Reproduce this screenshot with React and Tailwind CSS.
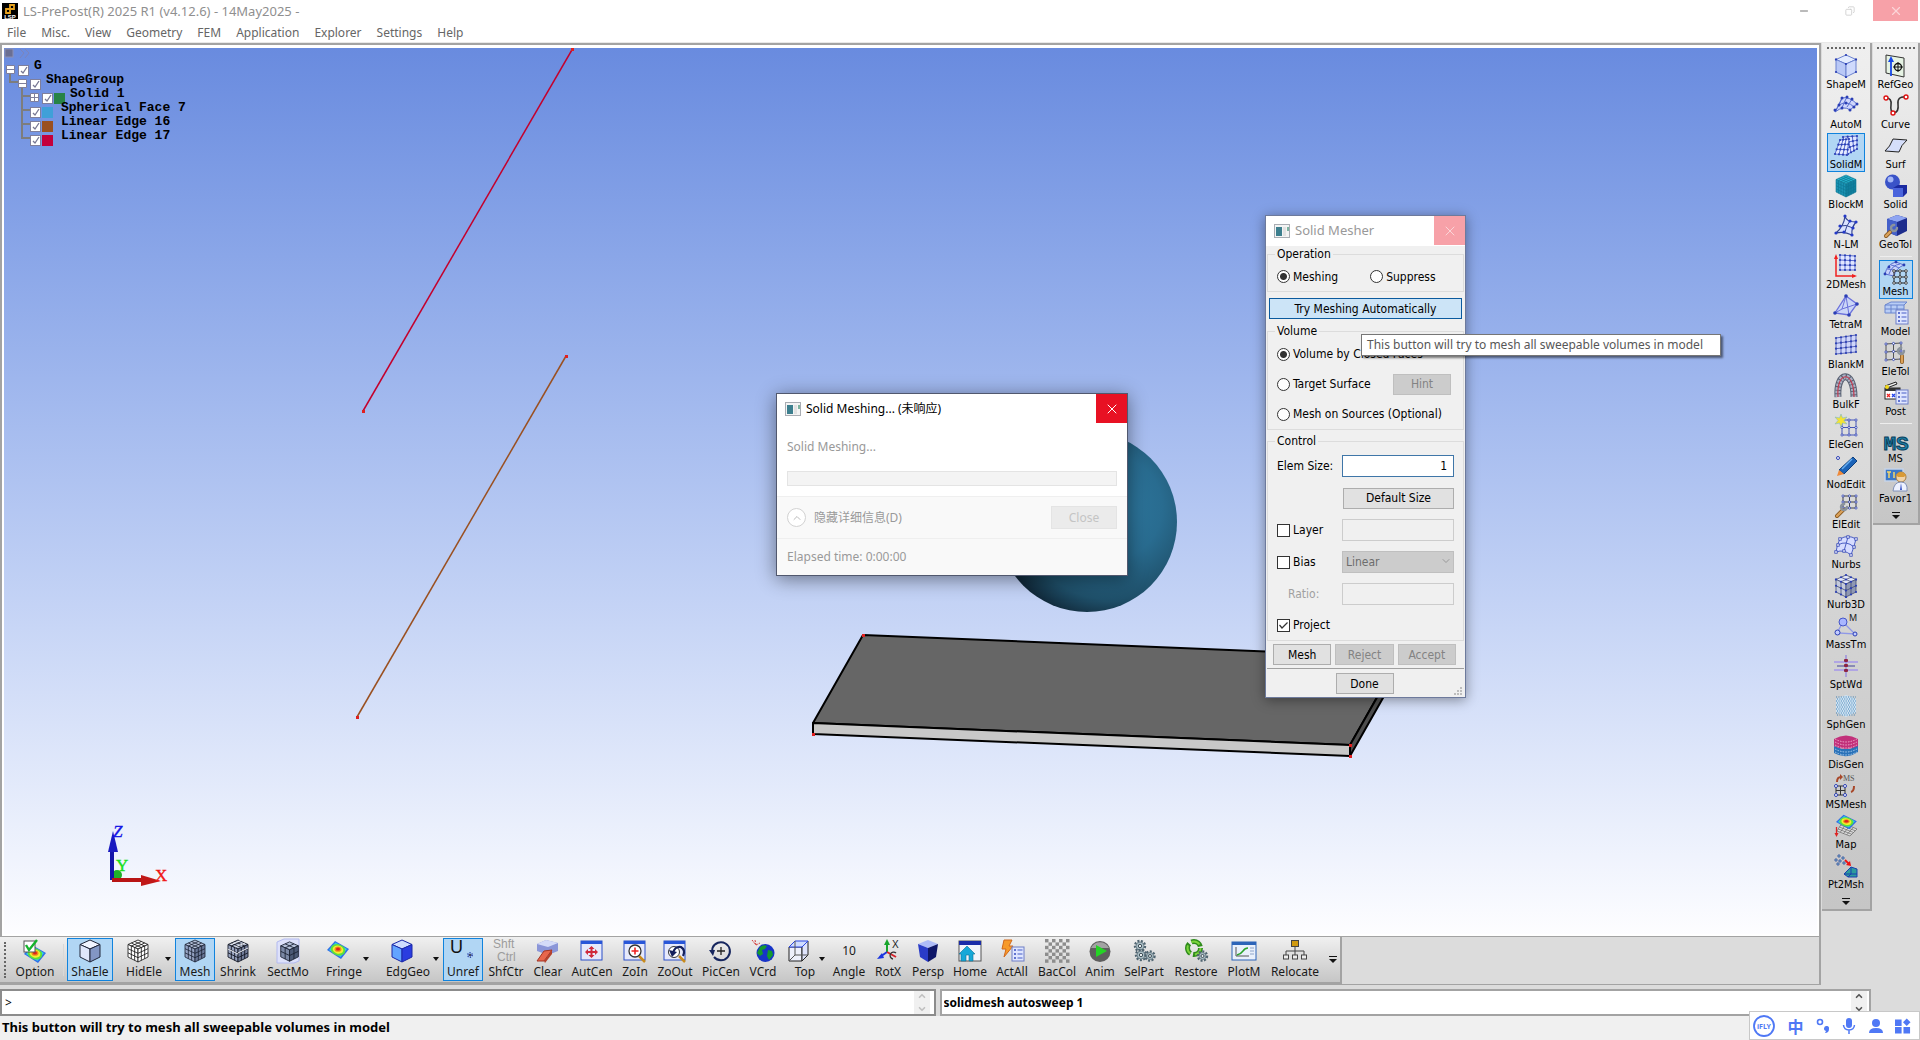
import React, { useState } from 'react';
import { ChevronDown, ChevronUp, X, Copy, Minus } from 'lucide-react';

const lerp = (a, b, t) => [a[0] + (b[0] - a[0]) * t, a[1] + (b[1] - a[1]) * t];
const pts = (list) => list.map((p) => p.join(',')).join(' ');

// four cornered patch split in n x m cells
const Patch = ({ c, n = 2, m = 2, line = '#5a6fd0', fill = 'none', dot = '#2b3fb5', r = 1.1, w = 1, open }) => {
  const at = (u, v) => lerp(lerp(c[0], c[1], u), lerp(c[3], c[2], u), v);
  const lines = [];
  const dots = [];
  for (let i = 0; i <= n; i++) lines.push([at(i / n, 0), at(i / n, 1)]);
  for (let j = 0; j <= m; j++) lines.push([at(0, j / m), at(1, j / m)]);
  for (let i = 0; i <= n; i++) for (let j = 0; j <= m; j++) dots.push(at(i / n, j / m));
  return (
    <g>
      <polygon points={pts(c)} fill={fill} />
      {lines.map(([a, b], i) => (
        <line key={i} x1={a[0]} y1={a[1]} x2={b[0]} y2={b[1]} stroke={line} strokeWidth={w} />
      ))}
      {dot && dots.map((p, i) => (
        <circle key={i} cx={p[0]} cy={p[1]} r={r} fill={open ? '#fff' : dot} stroke={dot} strokeWidth={open ? 0.8 : 0} />
      ))}
    </g>
  );
};

const Cube = ({ top, left, right, line, n = 1, dot = null, w = 1 }) => (
  <g>
    <Patch c={[[12, 1], [22, 5.5], [12, 10], [2, 5.5]]} n={n} m={n} fill={top} line={line} dot={dot} w={w} />
    <Patch c={[[2, 5.5], [12, 10], [12, 23], [2, 18]]} n={n} m={n} fill={left} line={line} dot={dot} w={w} />
    <Patch c={[[12, 10], [22, 5.5], [22, 18], [12, 23]]} n={n} m={n} fill={right} line={line} dot={dot} w={w} />
  </g>
);

const Contour = ({ y = 0 }) => (
  <g transform={`translate(0 ${y})`}>
    <polygon points="9,1 23,9 15,19 1,10" fill="#2f6fe8" />
    <polygon points="9.5,2.5 21,9 14.5,17 3,10" fill="#2fd3e0" />
    <ellipse cx="12" cy="9.8" rx="7.4" ry="5.6" fill="#5ee03a" transform="rotate(15 12 9.8)" />
    <ellipse cx="12" cy="9.6" rx="5.4" ry="4" fill="#f5ee2e" transform="rotate(15 12 9.6)" />
    <ellipse cx="12" cy="9.2" rx="3.4" ry="2.6" fill="#f08a1c" />
    <ellipse cx="12" cy="9" rx="2" ry="1.5" fill="#e0231b" />
  </g>
);

const Gear = ({ x, y, r }) => (
  <g transform={`translate(${x} ${y})`}>
    <circle r={r} fill="none" stroke="#4f6470" strokeWidth="2.4" strokeDasharray="2 1.4" />
    <circle r={r - 1} fill="#a9bcc4" stroke="#60757f" strokeWidth="0.8" />
    <circle r={r / 3} fill="#e8eef0" stroke="#33444d" strokeWidth="0.9" />
  </g>
);

const Frame = ({ children, x = 1 }) => (
  <g>
    <rect x={x} y="2" width="21" height="19" fill="#e6e9fb" stroke="#2a4fc8" />
    <rect x={x} y="2" width="21" height="3" fill="#2856d8" />
    {children}
  </g>
);

const Sheet = ({ x = 11, y = 9 }) => (
  <g transform={`translate(${x} ${y})`}>
    <rect x="0" y="0" width="12" height="14" fill="#dfe6ff" stroke="#6f7fc6" />
    {[3, 7, 11].map((v) => (
      <g key={v}>
        <rect x="2" y={v - 1} width="2" height="2" fill="#6073cf" />
        <path d={`M5.5 ${v}H10.5`} stroke="#6073cf" strokeWidth="1.2" />
      </g>
    ))}
  </g>
);

const Wrench = ({ d = 'M3 22L11 14', hx = 13, hy = 12 }) => (
  <g fill="none" strokeLinecap="round">
    <path d={d} stroke="#8a5a22" strokeWidth="4" />
    <path d={d} stroke="#dba25a" strokeWidth="2.4" />
    <circle cx={hx} cy={hy} r="3" stroke="#8b939c" strokeWidth="2.4" strokeDasharray="14 5" />
  </g>
);

const icons = {
  ShapeM: <Cube top="#e3ecff" left="#b9c8f6" right="#cfdafc" line="#6c82cf" dot="#2b3fb5" />,
  AutoM: (
    <g>
      <path d="M8 4Q15 2 23 10L16 16Q10 11 1 18Q5 10 8 4Z" fill="#cfd6fb" stroke="#5a6fd0" />
      <path d="M13 3Q10 8 8 14M18 5Q15 10 13 13M5 11Q13 6 20 13M8 4Q6 10 1 18" stroke="#5a6fd0" fill="none" />
      {[[8, 4], [13, 3], [18, 5], [23, 10], [16, 16], [8, 14], [1, 16], [20, 13], [5, 11], [12, 9]].map(([x, y]) => (
        <circle key={x + '-' + y} cx={x} cy={y} r="1.5" fill="#2b3fb5" />
      ))}
    </g>
  ),
  SolidM: (
    <g>
      <Patch c={[[9, 3], [23, 2], [23, 15], [14, 20]]} n={3} m={3} fill="#dfe5ff" />
      <Patch c={[[6, 6], [15, 5], [13, 21], [1, 20]]} n={3} m={3} fill="#e6ebff" />
    </g>
  ),
  BlockM: <Cube top="#26b5cf" left="#1a93b4" right="#107f9f" line="#0d7592" n={4} w={0.6} />,
  'N-LM': (
    <g>
      <path d="M11 2Q12 8 22 8Q17 14 18 21Q10 17 2 19Q10 12 11 2Z" fill="#dbe3ff" stroke="#32438f" strokeWidth="1.2" />
      <path d="M6 12Q12 10 19 14M16 7Q12 12 11 18" fill="none" stroke="#32438f" />
      {[[11, 2], [22, 8], [18, 21], [2, 19], [6, 12], [19, 14], [16, 7], [10, 18]].map(([x, y]) => (
        <circle key={x + '-' + y} cx={x} cy={y} r="1.6" fill="#2439c8" />
      ))}
    </g>
  ),
  '2DMesh': (
    <g>
      <Patch c={[[6, 1], [21, 2], [21, 16], [6, 16]]} n={3} m={3} fill="#e1e6ff" />
      <path d="M2 4V22H21" stroke="#f02020" strokeWidth="1.5" fill="none" />
      <path d="M0 5L2 0L4 5ZM18 20L23 22L18 24Z" fill="#f02020" />
    </g>
  ),
  TetraM: (
    <g>
      <path d="M12 2L23 10L15 21L1 19Z" fill="#cbd6f7" stroke="#6c72dc" strokeWidth="1.3" />
      <path d="M12 2L15 21M12 2L8 15L1 19M8 15L23 10" stroke="#6c72dc" fill="none" />
      {[[12, 2], [23, 10], [15, 21], [1, 19]].map(([x, y]) => <circle key={x} cx={x} cy={y} r="1.8" fill="#2b3fb5" />)}
    </g>
  ),
  BlankM: <Patch c={[[2, 4], [22, 1], [22, 18], [2, 20]]} n={4} m={3} fill="#cfd6fb" line="#5b67b6" />,
  BulkF: (
    <g fill="none">
      <path d="M4 23C2 -3 20 -5 20 23" stroke="#596172" strokeWidth="7" />
      <path d="M4 23C2 -3 20 -5 20 23" stroke="#aab1c4" strokeWidth="5" strokeDasharray="2.5 1" />
      <path d="M4 23C2 -3 20 -5 20 23" stroke="#c23c50" strokeWidth="1.2" />
    </g>
  ),
  EleGen: (
    <g>
      <Patch c={[[8, 6], [22, 6], [22, 21], [8, 21]]} n={2} m={2} line="#4757b8" open />
      <path d="M7 0L8.5 4L13 3L10 6.5L13 10L8.5 9L7 13L5.5 9L1 10L4 6.5L1 3L5.5 4Z" fill="#f6e332" stroke="#6fb3c9" strokeWidth="0.5" />
    </g>
  ),
  NodEdit: (
    <g>
      <circle cx="4" cy="4" r="1.5" fill="#fff" stroke="#2b3fb5" />
      <path d="M19 3L23 7L10 20L5 16Z" fill="#1b63b8" stroke="#0e3f7c" />
      <path d="M5 16L10 20L3 22Z" fill="#f08a3a" />
      <path d="M18 5L8 15" stroke="#67aef0" strokeWidth="1.5" />
    </g>
  ),
  ElEdit: (
    <g>
      <Patch c={[[9, 2], [22, 2], [22, 14], [9, 14]]} n={2} m={2} line="#444" dot="#2b3fb5" open />
      <Wrench d="M3 22L9 16" hx={10} hy={13} />
    </g>
  ),
  Nurbs: (
    <g>
      <path d="M6 5Q14 0 22 5Q20 13 17 21Q10 15 2 18Q3 10 6 5Z" fill="#d6dcff" stroke="#4c5fc4" />
      <path d="M14 3Q12 10 10 17M4 11Q12 6 20 13" stroke="#4c5fc4" fill="none" />
      {[[6, 5], [14, 3], [22, 5], [20, 13], [17, 21], [10, 17], [2, 18], [4, 11]].map(([x, y]) => (
        <rect key={x} x={x - 1.2} y={y - 1.2} width="2.4" height="2.4" fill="#fff" stroke="#2b3fb5" strokeWidth="0.8" />
      ))}
    </g>
  ),
  Nurb3D: <Cube top="#e3e7f8" left="#c5cbdc" right="#8f98b4" line="#454e73" dot="#2b3fb5" n={2} w={0.8} />,
  MassTm: (
    <g>
      <path d="M9 8L3 19L21 20Z" fill="none" stroke="#8f98e8" strokeWidth="1.3" />
      <circle cx="9" cy="8" r="4" fill="#a9b6ff" stroke="#4454c8" />
      <circle cx="3.5" cy="18.5" r="2.5" fill="#c3ccff" stroke="#2b3fb5" />
      <circle cx="21" cy="20" r="2" fill="#c3ccff" stroke="#2b3fb5" />
      <text x="15" y="7" fontSize="9" fontFamily="Noto Sans" fill="#222">M</text>
    </g>
  ),
  SptWd: (
    <g>
      <path d="M0 8H24M0 16H24" stroke="#a596ea" strokeWidth="1.5" />
      <path d="M3 12H21" stroke="#43439a" strokeWidth="1" />
      <path d="M12 1V23" stroke="#8d7fe0" strokeWidth="1.2" />
      {[7, 12, 17].map((y) => <rect key={y} x="10" y={y - 2} width="4" height="3" rx="1" fill="#8c2444" />)}
    </g>
  ),
  SphGen: (
    <g>
      <path d="M2 5L12 1L22 5V18L12 23L2 18Z" fill="#cfe3f3" />
      {[3, 5, 7, 9, 11, 13, 15, 17, 19, 21].map((y, j) => (
        <path key={y} d={`M${2 + (j % 2)} ${y}H22`} stroke="#3f7fb2" strokeWidth="1.1" strokeDasharray="1.1 1.3" />
      ))}
    </g>
  ),
  DisGen: (
    <g>
      <path d="M0 12L8 15H16L24 11V18Q12 26 0 19Z" fill="#2a72b8" />
      <path d="M0 5Q12 -2 24 5V12Q12 18 0 12Z" fill="#c2307a" />
      <path d="M1 8Q12 14 23 8M1 11Q12 17 23 11M1 5Q12 11 23 5" stroke="#f2b4d2" strokeWidth="0.9" strokeDasharray="1.5 1.2" fill="none" />
      <path d="M1 15Q12 21 23 15M1 18Q12 24 23 18" stroke="#b4d4f2" strokeWidth="0.9" strokeDasharray="1.5 1.2" fill="none" />
    </g>
  ),
  MSMesh: (
    <g>
      <path d="M3 8Q3 3 7 3" stroke="#a8482a" strokeWidth="2" fill="none" />
      <path d="M6 0L9 3L6 6Z" fill="#a8482a" />
      <path d="M20 12Q20 17 17 18" stroke="#a8482a" strokeWidth="2" fill="none" />
      <text x="9" y="7" fontSize="8" fontFamily="Liberation Serif" fill="#555">MS</text>
      <Patch c={[[2, 12], [11, 12], [11, 21], [2, 21]]} n={2} m={2} line="#333" dot={null} />
      {[[2, 12], [11, 12], [11, 21], [2, 21]].map(([x, y]) => (
        <circle key={x + '-' + y} cx={x} cy={y} r="1.5" fill="#fff" stroke="#2b3fb5" />
      ))}
    </g>
  ),
  Map: (
    <g>
      <Patch c={[[8, 9], [23, 15], [16, 22], [3, 17]]} n={4} m={4} fill="#ddd" line="#666" dot={null} w={0.7} />
      <g transform="translate(1 0) scale(.95 .8)"><Contour /></g>
      <path d="M2.5 13V20" stroke="#d22" strokeWidth="1.3" />
      <path d="M0.5 19H4.5L2.5 23Z" fill="#d22" />
    </g>
  ),
  Pt2Msh: (
    <g>
      {[[5, 2], [9, 4], [2, 6], [6, 7], [10, 9], [4, 10]].map(([x, y]) => (
        <circle key={x} cx={x} cy={y} r="1.2" fill="#8fd0d8" stroke="#2b3f95" strokeWidth="0.8" />
      ))}
      <path d="M11 6L15 10" stroke="#e11" strokeWidth="1.8" />
      <path d="M17 12L12 11L16 7Z" fill="#e11" />
      <path d="M10 20L17 13L23 15V23H14Z" fill="#2d9c9c" stroke="#1a3fb0" />
      <path d="M10 20H23M17 13V20L14 23" stroke="#1a3fb0" fill="none" />
    </g>
  ),
  RefGeo: (
    <g>
      <path d="M2 1L20 4V23L2 19Z" fill="#e6f3e4" stroke="#333" />
      <path d="M7 22V5" stroke="#1748e8" strokeWidth="1.8" />
      <path d="M4 8L7 2L10 8Z" fill="#1748e8" />
      <circle cx="14" cy="13" r="3.5" fill="none" stroke="#111" strokeWidth="1.3" />
      <path d="M9 13H19M14 8V18" stroke="#111" />
    </g>
  ),
  Curve: (
    <g>
      <path d="M2 4Q8 4 7 11T10 19Q15 18 14 10T22 3" stroke="#333" strokeWidth="1.6" fill="none" />
      {[[2, 4], [9, 19], [22, 3]].map(([x, y]) => (
        <circle key={x} cx={x} cy={y} r="2" fill="#fff" stroke="#d11" strokeWidth="1.4" />
      ))}
    </g>
  ),
  Surf: <path d="M9 5L23 6Q17 11 15 18L1 17Q6 13 9 5Z" fill="#d5defa" stroke="#222" />,
  Solid: (
    <g>
      <circle cx="8.5" cy="8" r="7.5" fill="#3a53c8" />
      <circle cx="6.5" cy="5.5" r="3" fill="#a4b6f6" />
      <path d="M9 14L14 11H23V19L19 23H9Z" fill="#1b2aa0" />
      <path d="M9 14H19V23H9Z" fill="#4a64dc" />
    </g>
  ),
  GeoTol: (
    <g>
      <path d="M3 5L13 1L23 4V17L13 22L3 18Z" fill="#1d2c8c" />
      <path d="M3 5L13 1L23 4L13 8Z" fill="#8fa5f2" />
      <path d="M3 5L13 8V22L3 18Z" fill="#4460ca" />
      <Wrench d="M2 22L6 18" hx={10} hy={14} />
    </g>
  ),
  Mesh: (
    <g>
      <path d="M1 13Q3 3 12 1L20 4Q12 7 10 15Z" fill="#c9d3fb" stroke="#5a6fd0" />
      <path d="M5 13Q8 4 16 3M3 8Q8 8 12 10M7 4Q12 5 15 7" stroke="#5a6fd0" fill="none" />
      {[[1, 13], [12, 1], [20, 4], [5, 6]].map(([x, y]) => <circle key={x} cx={x} cy={y} r="1.4" fill="#2b3fb5" />)}
      <Patch c={[[10, 10], [22, 10], [22, 22], [10, 22]]} n={2} m={2} line="#222" dot="#222" open r={1.3} />
    </g>
  ),
  Model: (
    <g>
      <path d="M1 4L7 1H23L20 4V12H1Z" fill="#b9cdf5" stroke="#6b86cf" />
      <path d="M1 8H20M7 4V12M13 4V12M1 4H20" stroke="#6b86cf" />
      <Sheet x={12} y={9} />
    </g>
  ),
  EleTol: (
    <g>
      <Patch c={[[2, 3], [17, 2], [17, 18], [2, 19]]} n={2} m={2} line="#555" dot="#2b3fb5" open />
      <Wrench d="M18 21L18 15" hx={17} hy={10} />
    </g>
  ),
  Post: (
    <g>
      <path d="M1 5L12 1L13 3L3 7Z" fill="#eee" stroke="#222" />
      <rect x="1" y="7" width="15" height="11" fill="#fff" stroke="#222" />
      <path d="M1 7H16V10H1Z" fill="#333" />
      <path d="M3 13l3 3m0-3l-3 3" stroke="#e22" strokeWidth="1.3" />
      <path d="M8 13l3 3m0-3l-3 3" stroke="#24e" strokeWidth="1.3" />
      <circle cx="3" cy="6" r="2" fill="#f3d91b" />
      <Sheet x={12} y={9} />
    </g>
  ),
  MS: (
    <text x="12" y="22" textAnchor="middle" fontSize="21" fontWeight="bold" fontFamily="Liberation Mono" fill="#1c7fa8" stroke="#0b3f5c" strokeWidth="1">MS</text>
  ),
  Favor1: (
    <g>
      <rect x="1" y="1" width="18" height="12" fill="#3c78c8" stroke="#c6d4e8" strokeWidth="1.5" />
      <path d="M5 4V10M3 4H7M10 4V10" stroke="#f6d66a" strokeWidth="1.5" />
      <circle cx="17" cy="9" r="5" fill="#f1d3a8" stroke="#a87b3c" />
      <path d="M12 7Q17 1 22 7L20 9H14Z" fill="#d99a35" />
      <path d="M9 23Q10 14 17 14T23 23Z" fill="#eef2ff" stroke="#8090b8" />
      <path d="M17 15L16 22H18Z" fill="#3a55c8" />
    </g>
  ),
  Option: (
    <g>
      <Contour y={5} />
      <rect x="1" y="2" width="11" height="11" fill="#fff" stroke="#555" />
      <path d="M3 6L6 11L14 1" stroke="#15b32c" strokeWidth="2.4" fill="none" />
    </g>
  ),
  ShaEle: <Cube top="#f1f4ff" left="#dfe6fb" right="#8296c4" line="#20263a" />,
  HidEle: <Cube top="#fff" left="#fff" right="#fff" line="#111" n={3} w={0.8} />,
  MeshB: <Cube top="#b4c0d8" left="#96a4c4" right="#6a7898" line="#1b2233" n={3} w={0.8} />,
  Shrink: (
    <g>
      <Cube top="#b4bdd2" left="#98a3bf" right="#717c98" line="#151a26" n={3} w={0.9} />
      <path d="M5 5.5L15 1.5M9 8L19 4M12 14L22 9M2 10L12 15" stroke="#f1f3f8" strokeWidth="1" />
    </g>
  ),
  SectMo: (
    <g>
      <path d="M1 3L8 0H23V22L18 24H1Z" fill="#dde1fa" stroke="#b3baf0" />
      <g transform="translate(3 2) scale(.88)">
        <Cube top="#b4c0d8" left="#7c89a6" right="#4c5976" line="#1b2233" n={2} />
      </g>
    </g>
  ),
  Fringe: <Contour y={1} />,
  EdgGeo: <Cube top="#cfdcff" left="#62a4ff" right="#2a3de0" line="#1a28a8" />,
  Unref: (
    <g>
      <text x="-1" y="14" fontSize="18" fontFamily="Liberation Sans" fill="#111">U</text>
      <circle cx="19" cy="16" r="2" fill="none" stroke="#3a52b0" strokeDasharray="1 1" strokeWidth="2" />
      <circle cx="19" cy="16" r="1" fill="#223" />
    </g>
  ),
  ShfCtr: (
    <g fontSize="12" fontFamily="Liberation Sans" fill="#9c9c9c">
      <text x="-1" y="9">Shft</text>
      <text x="3" y="22">Ctrl</text>
    </g>
  ),
  Clear: (
    <g>
      <path d="M1 5L10 1L22 4V12L12 16L1 12Z" fill="#8b96d8" />
      <path d="M1 5L10 1L22 4L12 8Z" fill="#d5dcf8" />
      <path d="M8 12L16 11L8 22L1 22Z" fill="#e8664c" stroke="#a43524" />
      <path d="M16 11V15L9 24L8 22Z" fill="#b5402c" />
    </g>
  ),
  AutCen: (
    <Frame>
      <path d="M11.5 8V18M6 13H17" stroke="#d02a3c" strokeWidth="2" />
      <path d="M8.5 10L11.5 7L14.5 10ZM8.5 16L11.5 19L14.5 16ZM8 10L5 13L8 16ZM15 10L18 13L15 16Z" fill="#d02a3c" />
    </Frame>
  ),
  ZoIn: (
    <Frame>
      <path d="M16 17L22 23" stroke="#c98b1c" strokeWidth="2.5" />
      <circle cx="12" cy="12" r="6" fill="#fff" stroke="#333" strokeWidth="1.3" />
      <path d="M12 8.5V15.5M8.5 12H15.5" stroke="#e22" strokeWidth="1.6" />
    </Frame>
  ),
  ZoOut: (
    <Frame>
      <path d="M16 17L22 23" stroke="#c98b1c" strokeWidth="2.5" />
      <circle cx="11" cy="13" r="5.5" fill="#fff" stroke="#333" />
      <path d="M10 15Q11 7 18 8Q23 11 20 17" stroke="#14205c" strokeWidth="2.2" fill="none" />
      <path d="M6 11L14 13L9 18Z" fill="#14205c" />
    </Frame>
  ),
  PicCen: (
    <g fill="none">
      <path d="M5 18A9 9 0 1 0 3.5 9L3 13" stroke="#16265e" strokeWidth="2" />
      <path d="M0 11L6 11L4 17Z" fill="#16265e" />
      <path d="M12 8V16M8 12H16" stroke="#222" strokeWidth="1.3" />
    </g>
  ),
  VCrd: (
    <g>
      <path d="M1 1L5 6M5 6L9 4M5 6L4 1" stroke="#d23a3a" strokeWidth="1" strokeDasharray="2 1" fill="none" />
      <circle cx="14.5" cy="14" r="9" fill="#1634c8" />
      <path d="M9 8q4-3 7-1l-2 3-3 1 1 4-3 2-3-3zM17 11l4 1 1 4-4 5-2-4z" fill="#159a2f" />
    </g>
  ),
  Top: (
    <g fill="none" stroke="#222">
      <path d="M2 8H15V22H2Z" fill="#eef0fb" />
      <path d="M15 8L21 2V16L15 22Z" fill="#dfe4fb" />
      <path d="M2 8L8 2H21L15 8Z" fill="#cfdcff" stroke="#2a46e0" />
      <path d="M2 22L8 16H21M8 16V2" stroke="#555" />
    </g>
  ),
  Angle: <text x="12" y="16" textAnchor="middle" fontSize="12" fontFamily="Noto Sans" fill="#1a1a1a">10</text>,
  RotX: (
    <g>
      <path d="M11 13V4" stroke="#18a52c" strokeWidth="2" />
      <path d="M8 6L11 0L14 6Z" fill="#18a52c" />
      <path d="M11 13L4 18" stroke="#1b36e0" strokeWidth="2" />
      <path d="M6 14L1 20L8 19Z" fill="#1b36e0" />
      <path d="M11 13L20 18" stroke="#d6222a" strokeWidth="2" />
      <path d="M17 20A3.5 3.5 0 1 1 20 14" fill="none" stroke="#333" strokeWidth="1.3" />
      <text x="16" y="9" fontSize="10" fontFamily="Liberation Sans" fill="#222">X</text>
    </g>
  ),
  Persp: (
    <g>
      <path d="M2 5L12 1L22 5L12 9Z" fill="#aebcf8" />
      <path d="M2 5L12 9V23L4 18Z" fill="#2a3cc8" />
      <path d="M22 5L12 9V23L20 18Z" fill="#0e1668" />
    </g>
  ),
  Home: (
    <g>
      <rect x="1" y="2" width="22" height="20" fill="#f2f4fa" stroke="#555" />
      <rect x="1" y="2" width="22" height="4" fill="#1a2ca8" />
      <path d="M1 15L9 7L17 15H15V22H11V16H8V22H3V15Z" fill="#16a8d8" stroke="#0e6f96" strokeWidth="0.6" />
    </g>
  ),
  ActAll: (
    <g>
      <path d="M4 1H12L9 7H13L4 18L6 10H2Z" fill="#f79a2a" stroke="#d1681a" />
      <Sheet x={12} y={8} />
    </g>
  ),
  BacCol: (
    <g fill="#8d8d8d">
      {[0, 1, 2, 3, 4, 5, 6].map((r) => [0, 1, 2, 3].map((c) => {
        const x = c * 7 + (r % 2 ? 3.5 : 0);
        return x < 24 && <rect key={r + '-' + c} x={x} y={r * 3.4} width="3.5" height="3.4" />;
      }))}
    </g>
  ),
  Anim: (
    <g>
      <circle cx="12" cy="12.5" r="10.5" fill="#5e5e5e" />
      <path d="M3 9A10 10 0 0 1 21 9Z" fill="#a2a2a2" />
      <path d="M8 6L19 12L8 18Z" fill="#25d325" />
    </g>
  ),
  SelPart: (
    <g>
      <Gear x={8} y={7} r={5} />
      <Gear x={9} y={16} r={5} />
      <Gear x={18} y={17} r={4.5} />
    </g>
  ),
  Restore: (
    <g>
      <circle cx="10" cy="9" r="6.5" fill="none" stroke="#2f8c1c" strokeWidth="5" strokeDasharray="11 2.6" />
      <circle cx="10" cy="9" r="6.5" fill="none" stroke="#7cd43c" strokeWidth="2" strokeDasharray="9 4.6" />
      <Gear x={18.5} y={17} r={4.5} />
    </g>
  ),
  PlotM: (
    <g>
      <rect x="0" y="3" width="24" height="18" fill="#e9f0fb" stroke="#2c64b8" />
      <rect x="0" y="3" width="24" height="3" fill="#2c64b8" />
      <path d="M4 8V17H17" stroke="#555" fill="none" />
      <path d="M5 16Q9 15 11 12T16 9" stroke="#2aa32a" strokeWidth="1.4" fill="none" />
      <path d="M18 9H22M18 12H22M18 15H22" stroke="#8ea4c8" />
    </g>
  ),
  Relocate: (
    <g fill="none" stroke="#444">
      <path d="M12 7V16M3 16V12H21V16" />
      <rect x="8.5" y="1.5" width="7" height="6" fill="#d09a10" />
      <rect x="0.5" y="16" width="5" height="4" fill="#eee" />
      <rect x="9.5" y="16" width="5" height="4" fill="#eee" />
      <rect x="18.5" y="16" width="5" height="4" fill="#eee" />
    </g>
  ),
};

const Icon = ({ name }) => (
  <svg viewBox="0 0 24 24" className="w-6 h-6 shrink-0 overflow-visible" aria-hidden="true">
    {icons[name]}
  </svg>
);

const menus = ['File', 'Misc.', 'View', 'Geometry', 'FEM', 'Application', 'Explorer', 'Settings', 'Help'];

const meshTools = [
  'ShapeM', 'AutoM', 'SolidM', 'BlockM', 'N-LM', '2DMesh', 'TetraM', 'BlankM', 'BulkF', 'EleGen', 'NodEdit',
  'ElEdit', 'Nurbs', 'Nurb3D', 'MassTm', 'SptWd', 'SphGen', 'DisGen', 'MSMesh', 'Map', 'Pt2Msh',
];

const mainGroups = [
  ['RefGeo', 'Curve', 'Surf', 'Solid', 'GeoTol'],
  ['Mesh', 'Model', 'EleTol', 'Post'],
  ['MS', 'Favor1'],
];

const viewTools = [
  { name: 'Option', width: 'w-[50px]' },
  { sep: true },
  { name: 'ShaEle', width: 'w-[46px]', on: true },
  { name: 'HidEle', width: 'w-[62px]', menu: true },
  { name: 'Mesh', icon: 'MeshB', width: 'w-[40px]', on: true },
  { name: 'Shrink', width: 'w-[46px]' },
  { name: 'SectMo', width: 'w-[54px]' },
  { name: 'Fringe', width: 'w-[58px]', menu: true },
  { name: 'EdgGeo', width: 'w-[70px]', menu: true },
  { name: 'Unref', width: 'w-[40px]', on: true },
  { name: 'ShfCtr', width: 'w-[46px]' },
  { name: 'Clear', width: 'w-[38px]' },
  { name: 'AutCen', width: 'w-[50px]' },
  { name: 'ZoIn', width: 'w-[36px]' },
  { name: 'ZoOut', width: 'w-[44px]' },
  { name: 'PicCen', width: 'w-[48px]' },
  { name: 'VCrd', width: 'w-[36px]' },
  { name: 'Top', width: 'w-[48px]', menu: true },
  { name: 'Angle', width: 'w-[40px]' },
  { name: 'RotX', width: 'w-[38px]' },
  { name: 'Persp', width: 'w-[42px]' },
  { name: 'Home', width: 'w-[42px]' },
  { name: 'ActAll', width: 'w-[42px]' },
  { name: 'BacCol', width: 'w-[48px]' },
  { name: 'Anim', width: 'w-[38px]' },
  { name: 'SelPart', width: 'w-[50px]' },
  { name: 'Restore', width: 'w-[54px]' },
  { name: 'PlotM', width: 'w-[42px]' },
  { name: 'Relocate', width: 'w-[60px]' },
];

const Caret = () => (
  <svg viewBox="0 0 6 4" className="w-[6px] h-[4px] shrink-0" aria-hidden="true">
    <path d="M0 0H6L3 4Z" fill="#111" />
  </svg>
);

const Overflow = () => (
  <svg viewBox="0 0 8 7" className="w-2 h-[7px]" aria-hidden="true">
    <path d="M0 0H8V1H0ZM0 3H8L4 7Z" fill="#111" />
  </svg>
);

const SideTool = ({ name, on, width }) => (
  <button
    className={`${width} h-[39px] mb-[1px] flex flex-col items-center border ${
      on ? 'bg-[#b1d6f4] border-[#1083dd]' : 'border-transparent'
    }`}
  >
    <Icon name={name} />
    <span className="text-[11px] leading-[14px] whitespace-nowrap">{name}</span>
  </button>
);

const SideColumn = ({ children, label, className }) => (
  <div
    role="toolbar"
    aria-label={label}
    className={`flex flex-col items-center self-start border-r-2 border-b-2 border-[#a3a3a3] bg-linear-to-b from-[#efefef] to-[#c6c6c6] pb-1 ${className}`}
  >
    <div className="w-[38px] mt-1 mb-1 h-[2px] border-t-2 border-dotted border-[#666]" />
    {children}
    <div className="h-3 flex items-end">
      <Overflow />
    </div>
  </div>
);

const TreeCheck = () => (
  <span className="relative w-[11px] h-[11px] mt-[6px] shrink-0">
    <input type="checkbox" defaultChecked aria-label="Show" className="appearance-none block w-[11px] h-[11px] bg-white border border-[#7f7f9c]" />
    <svg viewBox="0 0 11 11" className="absolute inset-0 pointer-events-none" aria-hidden="true">
      <path d="M3 6L5 8L9 2" stroke="#777793" strokeWidth="1.3" fill="none" />
    </svg>
  </span>
);

const Expander = ({ plus }) => (
  <svg viewBox="0 0 9 9" className="w-[9px] h-[9px] mt-[6px] mr-[3px] shrink-0" aria-hidden="true">
    <path d="M0.5 0.5H8.5V8.5H0.5Z" fill="#fff" stroke="#7f7f9c" />
    <path d={plus ? 'M0 4.5H9M4.5 0V9' : 'M0 4.5H9'} stroke="#7f7f9c" />
  </svg>
);

const tree = [
  { text: 'G', pad: 'pl-[2px]', gap: 'ml-[5px]', box: 'minus' },
  { text: 'ShapeGroup', pad: 'pl-[14px]', gap: 'ml-[5px]', box: 'minus' },
  { text: 'Solid 1', pad: 'pl-[26px]', gap: 'ml-[5px]', box: 'plus', swatch: 'bg-[#278346]' },
  { text: 'Spherical Face 7', pad: 'pl-[26px]', gap: 'ml-2', swatch: 'bg-[#3fa0d8]' },
  { text: 'Linear Edge 16', pad: 'pl-[26px]', gap: 'ml-2', swatch: 'bg-[#9a5020]' },
  { text: 'Linear Edge 17', pad: 'pl-[26px]', gap: 'ml-2', swatch: 'bg-[#c4003c]' },
];

const ModelTree = () => (
  <div className="relative w-60 font-['Liberation_Mono',monospace] font-bold text-[13px] leading-[14px] text-black">
    <svg viewBox="0 0 60 100" className="absolute left-0 top-0 w-[60px] h-[100px]" aria-hidden="true">
      <rect x="1" y="1" width="8" height="8" fill="#6a6f93" stroke="#8c90b4" />
      <path d="M16 1L20 5L16 10M21 1L25 5L21 10" stroke="#7c84bb" fill="none" />
      <path d="M6 24V34H14M18 38V90H26M18 76H26M18 62H26M18 48H26" stroke="#7d7d7d" strokeWidth="2" fill="none" />
    </svg>
    <ul className="relative pt-[11px]">
      {tree.map((row) => (
        <li key={row.text} className={`flex items-start h-[14px] ${row.pad}`}>
          {row.box && <Expander plus={row.box === 'plus'} />}
          <TreeCheck />
          {row.swatch && <span className={`w-[11px] h-[11px] mt-[6px] ml-[1px] shrink-0 ${row.swatch}`} />}
          <span className={`whitespace-pre ${row.gap}`}>{row.text}</span>
        </li>
      ))}
    </ul>
  </div>
);

const Scene = () => (
  <svg className="absolute inset-0 w-full h-full" aria-hidden="true">
    <defs>
      <radialGradient id="ball" cx="0.63" cy="0.42" r="0.64">
        <stop offset="0" stopColor="#2e789f" />
        <stop offset="0.45" stopColor="#296c90" />
        <stop offset="0.8" stopColor="#1f506a" />
        <stop offset="1" stopColor="#11293a" />
      </radialGradient>
    </defs>
    <g transform="translate(-4 -48)">
      <path d="M573 48L363 411" stroke="#c4002c" strokeWidth="1.5" />
      <path d="M566 356L357 717" stroke="#9a5020" strokeWidth="1.5" />
      <circle cx="1087" cy="522" r="90" fill="url(#ball)" />
      <g stroke="#000" strokeWidth="2" strokeLinejoin="round">
        <path d="M863 635L1400 657L1350 745L813 723Z" fill="#666" />
        <path d="M813 723L1350 745V756L813 734Z" fill="#c8c8c8" />
        <path d="M1400 657V668L1350 756V745Z" fill="#4d4d4d" />
      </g>
      {[[572, 49], [363, 411], [566, 356], [357, 717], [863, 635], [813, 734], [1350, 745], [1350, 756]].map(([x, y]) => (
        <rect key={x + '-' + y} x={x - 1} y={y - 1} width="3" height="3" fill="#e02020" />
      ))}
      <circle cx="117" cy="875" r="5" fill="#1fb02a" />
      <path d="M112 880V845" stroke="#1414a8" strokeWidth="4" />
      <path d="M108 852L113 831L118 852Z" fill="#1a1ac0" />
      <path d="M112 880H144" stroke="#b81414" strokeWidth="4" />
      <path d="M141 875L161 881L141 886Z" fill="#c01818" />
      <g fontFamily="Liberation Serif" fontSize="17">
        <text x="113" y="837" fill="#1414e6" stroke="#1414e6" strokeWidth="0.4" fontStyle="italic">Z</text>
        <text x="116" y="871" fill="#17e017" stroke="#17e017" strokeWidth="0.4">Y</text>
        <text x="155" y="881" fill="#f01616" stroke="#f01616" strokeWidth="0.4">X</text>
      </g>
    </g>
  </svg>
);

const AppGlyph = () => (
  <svg viewBox="0 0 16 14" className="w-4 h-[14px]" aria-hidden="true">
    <rect x="0.5" y="0.5" width="15" height="13" fill="#f4f4f4" stroke="#a9adb3" />
    <rect x="2" y="3" width="6" height="9" fill="#3d7f8e" />
    <rect x="9" y="3" width="3" height="9" fill="#e2e2e2" />
    <rect x="13" y="3" width="2" height="4" fill="#7fb4a0" />
  </svg>
);

const Radio = ({ name, label, value, current, onPick }) => (
  <label className="flex items-center gap-[3px]">
    <input
      type="radio"
      name={name}
      checked={current === value}
      onChange={() => onPick(value)}
      className="appearance-none w-[13px] h-[13px] rounded-full border border-[#333] bg-white checked:bg-[radial-gradient(circle,#333_0_3px,#fff_4px)]"
    />
    {label}
  </label>
);

const Check = ({ label, checked }) => {
  const [on, setOn] = useState(!!checked);
  return (
    <label className="relative flex items-center gap-[3px]">
      <input
        type="checkbox"
        checked={on}
        onChange={(e) => setOn(e.target.checked)}
        className="appearance-none w-[13px] h-[13px] border border-[#333] bg-white"
      />
      {on && (
        <svg viewBox="0 0 13 13" className="absolute left-0 w-[13px] h-[13px] pointer-events-none" aria-hidden="true">
          <path d="M2.5 6L5 9L10.5 3.5" stroke="#333" strokeWidth="1.2" fill="none" />
        </svg>
      )}
      {label}
    </label>
  );
};

const Group = ({ title, children }) => (
  <fieldset className="border border-[#dcdcdc] min-w-0">
    <legend className="ml-[7px] px-[2px] leading-4">{title}</legend>
    {children}
  </fieldset>
);

const PushButton = ({ children, disabled, className }) => (
  <button
    disabled={disabled}
    className={`h-[21px] border leading-none ${
      disabled ? 'bg-[#cccccc] border-[#bfbfbf] text-[#838383]' : 'bg-[#e1e1e1] border-[#adadad]'
    } ${className}`}
  >
    {children}
  </button>
);

const Row = ({ children }) => <div className="h-8 flex items-center justify-between">{children}</div>;

const SolidMesher = () => {
  const [operation, setOperation] = useState('meshing');
  const [volume, setVolume] = useState('closed');

  return (
    <section className="absolute left-[1261px] top-[167px] w-[201px] border border-[#6d7a9c] bg-[#f0f0f0] text-black text-[12px] shadow-[0_2px_12px_rgba(0,0,0,0.4)] font-['DejaVu_Sans_Condensed','DejaVu_Sans',sans-serif]">
      <header className="h-[30px] bg-white flex items-center pl-2 text-[#999] text-[13px] font-['Noto_Sans',sans-serif]">
        <AppGlyph />
        <h2 className="ml-[5px] flex-1">Solid Mesher</h2>
        <button aria-label="Close" className="self-start w-[31px] h-[29px] bg-[#f7a1a8] flex items-center justify-center">
          <X className="w-4 h-4 text-[#fbd5d8]" strokeWidth={1.5} />
        </button>
      </header>

      <div className="px-[1px]">
        <Group title="Operation">
          <div className="h-[29px] flex items-center pl-[9px] gap-8">
            <Radio name="operation" label="Meshing" value="meshing" current={operation} onPick={setOperation} />
            <Radio name="operation" label="Suppress" value="suppress" current={operation} onPick={setOperation} />
          </div>
        </Group>

        <div className="px-[2px] pt-[6px] pb-1 flex">
          <button className="flex-1 h-[21px] leading-none bg-[#cce4f7] border border-[#0a5a9e]">Try Meshing Automatically</button>
        </div>

        <Group title="Volume">
          <div className="pl-[9px] pr-3">
            <div className="h-[30px] flex items-center">
              <Radio name="volume" label="Volume by Closed Faces" value="closed" current={volume} onPick={setVolume} />
            </div>
            <div className="h-[30px] flex items-center justify-between">
              <Radio name="volume" label="Target Surface" value="target" current={volume} onPick={setVolume} />
              <PushButton disabled className="w-[58px]">Hint</PushButton>
            </div>
            <div className="h-[30px] flex items-center whitespace-nowrap">
              <Radio name="volume" label="Mesh on Sources (Optional)" value="sources" current={volume} onPick={setVolume} />
            </div>
          </div>
        </Group>

        <div className="h-[3px]" />

        <Group title="Control">
          <div className="px-[9px] pt-[1px]">
            <Row>
              <label htmlFor="elem-size">Elem Size:</label>
              <input id="elem-size" defaultValue="1" className="w-[112px] h-[22px] px-[6px] text-right bg-white border border-[#3f76a8] outline-none" />
            </Row>
            <div className="h-8 flex items-center justify-end">
              <PushButton className="w-[111px]">Default Size</PushButton>
            </div>
            <Row>
              <Check label="Layer" />
              <input aria-label="Layer" disabled className="w-[112px] h-[22px] border border-[#cccccc]" />
            </Row>
            <Row>
              <Check label="Bias" />
              <span className="relative w-[112px] h-[22px]">
                <select aria-label="Bias" disabled className="appearance-none w-full h-full pl-[3px] bg-[#cccccc] border border-[#bfbfbf] text-[#6d6d6d] opacity-100">
                  <option>Linear</option>
                </select>
                <ChevronDown className="absolute right-[2px] top-1 w-3 h-3 text-[#999] pointer-events-none" />
              </span>
            </Row>
            <Row>
              <label htmlFor="ratio" className="pl-[11px] text-[#a0a0a0]">Ratio:</label>
              <input id="ratio" disabled className="w-[112px] h-[22px] border border-[#cccccc]" />
            </Row>
            <div className="h-[30px] flex items-center">
              <Check label="Project" checked />
            </div>
          </div>
        </Group>

        <div className="flex gap-1 pl-[6px] pr-2 py-[3px]">
          <PushButton className="flex-1">Mesh</PushButton>
          <PushButton disabled className="flex-1">Reject</PushButton>
          <PushButton disabled className="flex-1">Accept</PushButton>
        </div>
        <div className="relative border-t border-[#a0a0a0] pt-1 pb-[3px] pr-[2px] flex justify-center">
          <PushButton className="w-[58px]">Done</PushButton>
          <svg viewBox="0 0 8 8" className="absolute right-[2px] bottom-[2px] w-2 h-2" aria-hidden="true">
            <path d="M6 0h2v2h-2zM3 3h2v2h-2zM6 3h2v2h-2zM0 6h2v2h-2zM3 6h2v2h-2zM6 6h2v2h-2z" fill="#bdbdbd" />
          </svg>
        </div>
      </div>
    </section>
  );
};

const ProgressDialog = () => (
  <section className="absolute left-[772px] top-[345px] w-[352px] border border-[#51586e] bg-white text-[12px] text-[#999] shadow-[0_3px_18px_rgba(0,0,0,0.45)] font-['Noto_Sans','Noto_Sans_CJK_SC',sans-serif]">
    <header className="h-[29px] flex items-center pl-2 text-black">
      <AppGlyph />
      <h2 className="ml-[5px] flex-1">Solid Meshing... (未响应)</h2>
      <button aria-label="Close" className="w-[31px] h-[29px] bg-[#e81123] flex items-center justify-center">
        <X className="w-4 h-4 text-white" strokeWidth={1.5} />
      </button>
    </header>
    <div className="px-[10px] pt-4 pb-[10px]">
      <p className="leading-4">Solid Meshing...</p>
      <div role="progressbar" aria-label="Solid Meshing" className="mt-4 h-[15px] bg-[#f4f4f4] border border-[#e4e4e4]" />
    </div>
    <div className="h-[42px] flex items-center px-[10px] bg-[#f9f9f9] border-t border-[#efefef]">
      <button className="flex items-center gap-2">
        <span className="w-[19px] h-[19px] rounded-full border border-[#d2d2d2] bg-white flex items-center justify-center">
          <ChevronUp className="w-3 h-3 text-[#bbb]" />
        </span>
        隐藏详细信息(D)
      </button>
      <button disabled className="ml-auto w-[66px] h-[23px] bg-[#ebebeb] border border-[#e4e4e4] text-[#c4c4c4]">Close</button>
    </div>
    <p className="h-[37px] flex items-center px-[10px] bg-[#f9f9f9] border-t border-[#efefef]">Elapsed time: 0:00:00</p>
  </section>
);

const Spinner = ({ color }) => (
  <span className={`w-4 bg-[#f0f0f0] flex flex-col justify-between items-center ${color}`}>
    <ChevronUp className="w-[10px] h-[10px]" strokeWidth={4} />
    <ChevronDown className="w-[10px] h-[10px]" strokeWidth={4} />
  </span>
);

const ImeBar = () => (
  <div className="absolute right-0 bottom-0 w-[171px] h-[29px] bg-white border border-[#c8c8c8] flex items-center justify-between text-[#4f78f5] pl-[3px] pr-2">
    <svg viewBox="0 0 22 22" className="w-[22px] h-[22px]" aria-hidden="true">
      <circle cx="11" cy="11" r="10" fill="none" stroke="#4f78f5" strokeWidth="1.8" />
      <text x="11" y="14" textAnchor="middle" fontSize="7" fontWeight="bold" fontFamily="Noto Sans" fill="#4f78f5">iFLY</text>
    </svg>
    <span className="text-[16px] leading-none font-bold font-['Noto_Sans_CJK_SC',sans-serif]">中</span>
    <svg viewBox="0 0 14 16" className="w-[14px] h-4" aria-hidden="true">
      <circle cx="4" cy="4" r="2.5" fill="none" stroke="#4f78f5" strokeWidth="1.6" />
      <path d="M13 11A2.5 2.5 0 1 0 10 13L9 15Q13 15 13 11Z" fill="#4f78f5" />
    </svg>
    <svg viewBox="0 0 14 16" className="w-[14px] h-4" aria-hidden="true">
      <rect x="4" y="0" width="6" height="10" rx="3" fill="#4f78f5" />
      <path d="M1.5 7Q2 12 7 12T12.5 7M7 12V16" stroke="#4f78f5" strokeWidth="1.5" fill="none" />
    </svg>
    <svg viewBox="0 0 14 16" className="w-[14px] h-4" aria-hidden="true">
      <circle cx="7" cy="5" r="4" fill="#4f78f5" />
      <path d="M0 15Q0 10 7 10T14 15Z" fill="#4f78f5" />
    </svg>
    <svg viewBox="0 0 17 16" className="w-4 h-4" aria-hidden="true">
      <path d="M0 1H7V8H0ZM0 9H7V16H0ZM9 9H16V16H9ZM12.5 0L16.5 4L12.5 8L8.5 4Z" fill="#4f78f5" />
    </svg>
  </div>
);

const App = () => {
  const [command, setCommand] = useState('>');

  return (
    <div className="relative h-screen flex flex-col overflow-hidden bg-[#dcdcdc] text-[12px] text-[#1a1a1a] font-['Noto_Sans','Noto_Sans_CJK_SC',sans-serif]">
      <header className="bg-white border-b border-[#e8e8e8]">
        <div className="h-[22px] flex items-center pl-[2px] pr-[2px] text-[#8f8f8f]">
          <svg viewBox="0 0 16 16" className="w-4 h-4" aria-hidden="true">
            <rect width="16" height="16" fill="#000" />
            <path d="M4 6h4v4h-4zM8 2h4v4h-4z" fill="none" stroke="#e8a320" strokeWidth="1.8" />
            <text x="8" y="16" textAnchor="middle" fontSize="6" fontWeight="bold" fontFamily="Liberation Sans" fill="#fff">LSP</text>
          </svg>
          <h1 className="ml-[5px] flex-1 text-[13px] leading-5">LS-PrePost(R) 2025 R1 (v4.12.6) - 14May2025 -</h1>
          <button aria-label="Minimize" className="w-[46px] flex justify-center"><Minus className="w-3 h-3 text-[#777]" /></button>
          <button aria-label="Restore" className="w-[46px] flex justify-center"><Copy className="w-[10px] h-[10px] text-[#ccc] -scale-x-100" /></button>
          <button aria-label="Close" className="self-start w-[45px] h-[21px] bg-[#f7a1a8] flex items-center justify-center">
            <X className="w-[14px] h-[14px] text-[#fbd5d8]" />
          </button>
        </div>
        <nav className="h-5 flex items-end gap-[15px] pl-[7px] text-[#666]">
          {menus.map((m) => <button key={m}>{m}</button>)}
        </nav>
      </header>

      <main className="flex-1 min-h-0 flex">
        <div className="flex-1 min-w-0 flex flex-col border-r-2 border-[#a3a3a3]">
          <div className="flex-1 min-h-0 border-2 border-r-0 border-b-0 border-[#a3a3a3] flex flex-col">
            <div className="flex-1 min-h-0 border-2 border-t-[3px] border-white flex">
              <div className="relative flex-1 bg-linear-to-b from-[#698bdf] to-[#fdfdff]">
                <Scene />
                <ModelTree />
                <ProgressDialog />
                <SolidMesher />
                <div role="tooltip" className="absolute left-[1357px] top-[286px] w-[360px] h-[22px] px-[5px] flex items-center bg-white border border-[#767676] text-[#575757] whitespace-nowrap shadow-[2px_2px_2px_rgba(0,0,0,0.5)]">
                  This button will try to mesh all sweepable volumes in model
                </div>
              </div>
            </div>
          </div>

          <div className="border-t border-b border-[#a3a3a3] flex">
            <div role="toolbar" aria-label="View" className="h-[47px] flex items-center border-r-2 border-b-2 border-[#a3a3a3] bg-linear-to-b from-[#f0f0f0] to-[#c6c6c6] pl-1">
              <div className="w-[2px] h-9 border-l-2 border-dotted border-[#666] mr-1" />
              {viewTools.map((tool, i) => tool.sep ? (
                <div key={i} className="w-[1px] h-8 bg-[#d8d8d8] mx-[3px]" />
              ) : (
                <button
                  key={tool.name}
                  className={`h-[43px] flex flex-col items-stretch border ${tool.width} ${
                    tool.on ? 'bg-[#b1d6f4] border-[#1083dd]' : 'border-transparent'
                  }`}
                >
                  <span className="flex items-center">
                    <span className="flex-1 flex justify-center"><Icon name={tool.icon || tool.name} /></span>
                    {tool.menu && <span className="w-3 pt-4 flex justify-center"><Caret /></span>}
                  </span>
                  <span className="text-center text-[12px] leading-[18px] whitespace-nowrap">{tool.name}</span>
                </button>
              ))}
              <div className="w-[15px] flex justify-center"><Overflow /></div>
            </div>
          </div>
        </div>

        <aside className="w-[99px] flex gap-[1px] pl-[1px] text-black font-['DejaVu_Sans_Condensed','DejaVu_Sans',sans-serif]">
          <SideColumn label="Element meshing" className="w-[50px]">
            {meshTools.map((name) => <SideTool key={name} name={name} width="w-[38px]" on={name === 'SolidM'} />)}
          </SideColumn>
          <SideColumn label="Main" className="flex-1">
            {mainGroups.map((group, i) => (
              <React.Fragment key={group[0]}>
                {i > 0 && <div className="w-8 h-[1px] my-[3px] bg-[#eee]" />}
                {group.map((name) => <SideTool key={name} name={name} width="w-[34px]" on={name === 'Mesh'} />)}
              </React.Fragment>
            ))}
          </SideColumn>
        </aside>
      </main>

      <div className="flex gap-1 pt-1 pr-[49px]">
        <div className="w-1/2 h-[27px] shrink-0 flex border-2 border-[#8c8c8c] bg-white pr-1">
          <input aria-label="Command" value={command} onChange={(e) => setCommand(e.target.value)} className="flex-1 min-w-0 px-[3px] outline-none text-black" />
          <Spinner color="text-[#c0c0c0]" />
        </div>
        <div className="flex-1 h-[27px] flex border-2 border-[#a3a3a3] bg-white pr-[2px]">
          <input aria-label="Command history" readOnly value="solidmesh autosweep 1" className="flex-1 min-w-0 px-[2px] outline-none font-bold text-black" />
          <Spinner color="text-[#555]" />
        </div>
      </div>

      <footer className="h-6 flex items-center pl-[2px] bg-[#f0f0f0] font-bold text-black text-[13px]">
        This button will try to mesh all sweepable volumes in model
      </footer>

      <ImeBar />
    </div>
  );
};

export default App;
